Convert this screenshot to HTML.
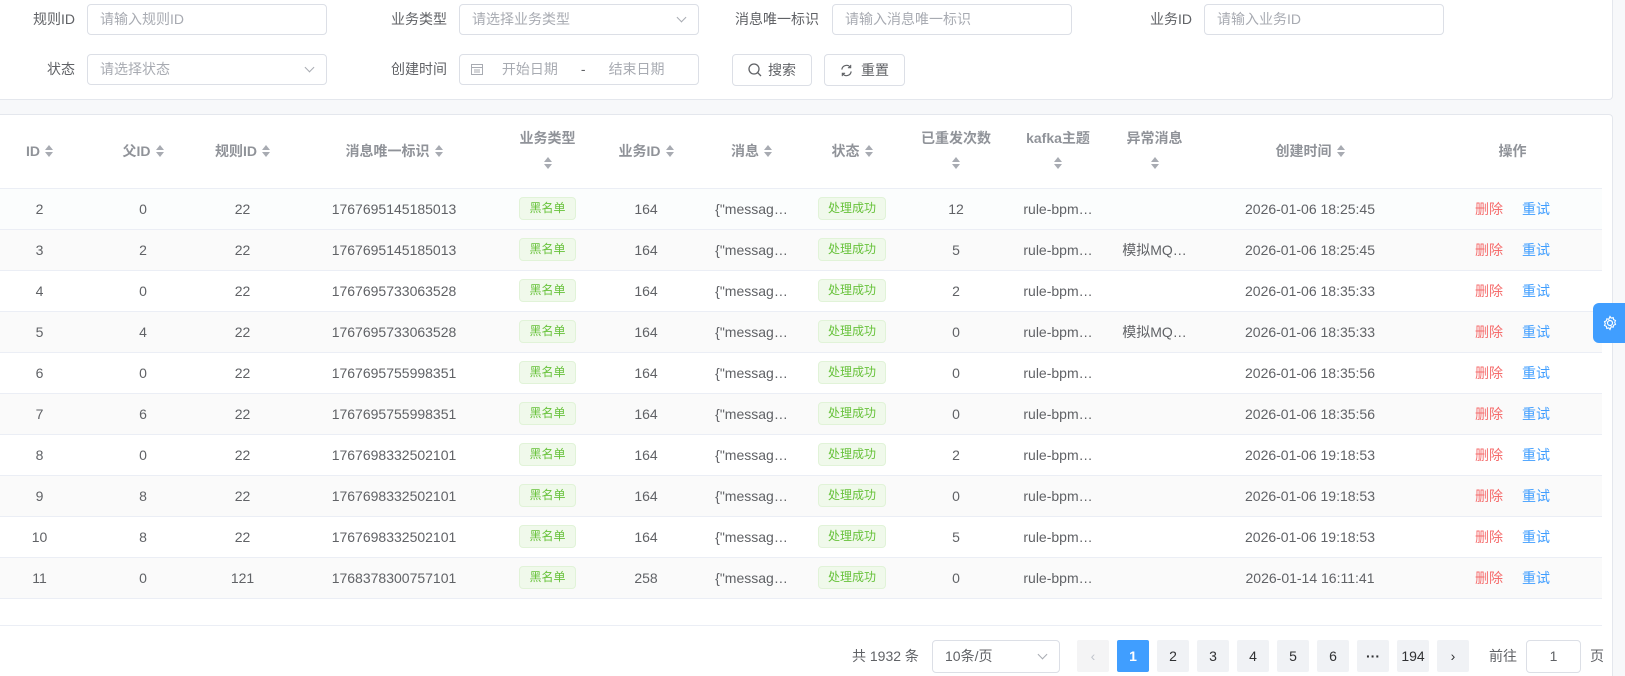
<!DOCTYPE html>
<html><head><meta charset="utf-8"><style>
*{box-sizing:border-box;margin:0;padding:0}
body{width:1625px;height:676px;overflow:hidden;background:#f7f8fa;font-family:"Liberation Sans","Noto Sans CJK SC",sans-serif;font-size:14px;color:#606266;position:relative}
.abs{position:absolute}
.filter{left:0;top:0;width:1613px;height:100px;background:#fff;border-bottom:1px solid #e4e7ed;border-right:1px solid #e4e7ed;border-radius:0 0 4px 0}
.card{left:0;top:114px;width:1613px;height:562px;border-top:1px solid #e4e7ed;border-right:1px solid #e4e7ed;border-radius:0 4px 0 0;background:#fff}
.lbl{font-size:14px;color:#606266;text-align:right;width:100px;height:31px;line-height:31px}
.inp{height:31px;border:1px solid #dcdfe6;border-radius:4px;color:#a8abb2;font-size:14px;line-height:29px;padding-left:12px;background:#fff}
.arrow{position:absolute;right:13px;top:9px;width:7px;height:7px;border-right:1px solid #a8abb2;border-bottom:1px solid #a8abb2;transform:rotate(45deg)}
.btn{height:32px;border:1px solid #dcdfe6;border-radius:4px;background:#fff;color:#606266;font-size:14px;line-height:30px;text-align:center}
table{position:absolute;left:0;top:115px;border-collapse:collapse;table-layout:fixed;width:1602px}
th{height:73px;color:#909399;font-weight:bold;font-size:14px;border-bottom:1px solid #ebeef5;text-align:center;padding:0}
td{height:41px;border-bottom:1px solid #ebeef5;text-align:center;padding:0;font-size:14px;white-space:nowrap}
tr.s td{background:#fafafa}
tr.h td{background:#fbfdfd}
.srt{display:inline-block;width:8px;height:12px;position:relative;vertical-align:-1px;margin-left:5px}
.srt:before{content:"";position:absolute;left:0;top:0;border:4px solid transparent;border-bottom:5px solid #a8abb2;border-top:0}
.srt:after{content:"";position:absolute;left:0;bottom:0;border:4px solid transparent;border-top:5px solid #a8abb2;border-bottom:0}
.tag{display:inline-block;height:23px;line-height:21px;padding:0 9px;font-size:12px;color:#67c23a;background:#f0f9eb;border:1px solid #e1f3d8;border-radius:4px}
.del{color:#f56c6c}.re{color:#409eff;margin-left:19px}
.pg{top:640px;width:32px;height:32px;border-radius:2px;background:#f0f2f5;color:#303133;text-align:center;line-height:32px;font-size:14px}
</style></head><body>
<div class="abs filter"></div>
<div class="abs card"></div>

<div class="abs lbl" style="left:-25px;top:4px">规则ID</div>
<div class="abs inp" style="left:87px;top:4px;width:240px">请输入规则ID</div>
<div class="abs lbl" style="left:347px;top:4px">业务类型</div>
<div class="abs inp" style="left:459px;top:4px;width:240px">请选择业务类型<span class="arrow"></span></div>
<div class="abs lbl" style="left:719px;top:4px">消息唯一标识</div>
<div class="abs inp" style="left:832px;top:4px;width:240px">请输入消息唯一标识</div>
<div class="abs lbl" style="left:1092px;top:4px">业务ID</div>
<div class="abs inp" style="left:1204px;top:4px;width:240px">请输入业务ID</div>

<div class="abs lbl" style="left:-25px;top:54px">状态</div>
<div class="abs inp" style="left:87px;top:54px;width:240px">请选择状态<span class="arrow"></span></div>
<div class="abs lbl" style="left:347px;top:54px">创建时间</div>
<div class="abs inp" style="left:459px;top:54px;width:240px;padding-left:11px">
<svg width="12" height="12" viewBox="0 0 12 12" style="vertical-align:-1px"><rect x="0.5" y="1.5" width="11" height="10" fill="none" stroke="#a8abb2"/><line x1="0.5" y1="4.5" x2="11.5" y2="4.5" stroke="#a8abb2"/><line x1="3" y1="7" x2="9" y2="7" stroke="#a8abb2"/><line x1="3" y1="9" x2="9" y2="9" stroke="#a8abb2"/></svg>
<span style="margin-left:15px">开始日期</span><span style="margin-left:23px;color:#606266">-</span><span style="margin-left:23px">结束日期</span></div>
<div class="abs btn" style="left:732px;top:54px;width:80px"><svg width="14" height="14" viewBox="0 0 14 14" style="vertical-align:-2px;margin-right:6px"><circle cx="6" cy="6" r="5" fill="none" stroke="#606266" stroke-width="1.3"/><line x1="9.6" y1="9.6" x2="13" y2="13" stroke="#606266" stroke-width="1.3"/></svg>搜索</div>
<div class="abs btn" style="left:824px;top:54px;width:81px"><svg width="13" height="13" viewBox="0 0 14 14" style="vertical-align:-2px;margin-right:8px"><path d="M2 6 A5 5 0 0 1 11 3.5 M12 8 A5 5 0 0 1 3 10.5" fill="none" stroke="#606266" stroke-width="1.3"/><path d="M11.5 1 V4 H8.5 M2.5 13 V10 H5.5" fill="none" stroke="#606266" stroke-width="1.2"/></svg>重置</div>

<table>
<colgroup><col style="width:79px"><col style="width:128px"><col style="width:71px"><col style="width:232px"><col style="width:75px"><col style="width:122px"><col style="width:89px"><col style="width:112px"><col style="width:96px"><col style="width:108px"><col style="width:85px"><col style="width:226px"><col style="width:179px"></colgroup>
<tr><th>ID<span class="srt"></span></th><th>父ID<span class="srt"></span></th><th>规则ID<span class="srt"></span></th><th>消息唯一标识<span class="srt"></span></th><th style="line-height:25px">业务类型<br><span class="srt" style="margin:0"></span></th><th>业务ID<span class="srt"></span></th><th>消息<span class="srt"></span></th><th>状态<span class="srt"></span></th><th style="line-height:25px">已重发次数<br><span class="srt" style="margin:0"></span></th><th style="line-height:25px">kafka主题<br><span class="srt" style="margin:0"></span></th><th style="line-height:25px">异常消息<br><span class="srt" style="margin:0"></span></th><th>创建时间<span class="srt"></span></th><th>操作</th></tr>
<tr class="h"><td>2</td><td>0</td><td>22</td><td>1767695145185013</td><td><span class="tag">黑名单</span></td><td>164</td><td>{"messag…</td><td><span class="tag">处理成功</span></td><td>12</td><td>rule-bpm…</td><td></td><td>2026-01-06 18:25:45</td><td><span class="del">删除</span><span class="re">重试</span></td></tr>
<tr class="s"><td>3</td><td>2</td><td>22</td><td>1767695145185013</td><td><span class="tag">黑名单</span></td><td>164</td><td>{"messag…</td><td><span class="tag">处理成功</span></td><td>5</td><td>rule-bpm…</td><td>模拟MQ…</td><td>2026-01-06 18:25:45</td><td><span class="del">删除</span><span class="re">重试</span></td></tr>
<tr><td>4</td><td>0</td><td>22</td><td>1767695733063528</td><td><span class="tag">黑名单</span></td><td>164</td><td>{"messag…</td><td><span class="tag">处理成功</span></td><td>2</td><td>rule-bpm…</td><td></td><td>2026-01-06 18:35:33</td><td><span class="del">删除</span><span class="re">重试</span></td></tr>
<tr class="s"><td>5</td><td>4</td><td>22</td><td>1767695733063528</td><td><span class="tag">黑名单</span></td><td>164</td><td>{"messag…</td><td><span class="tag">处理成功</span></td><td>0</td><td>rule-bpm…</td><td>模拟MQ…</td><td>2026-01-06 18:35:33</td><td><span class="del">删除</span><span class="re">重试</span></td></tr>
<tr><td>6</td><td>0</td><td>22</td><td>1767695755998351</td><td><span class="tag">黑名单</span></td><td>164</td><td>{"messag…</td><td><span class="tag">处理成功</span></td><td>0</td><td>rule-bpm…</td><td></td><td>2026-01-06 18:35:56</td><td><span class="del">删除</span><span class="re">重试</span></td></tr>
<tr class="s"><td>7</td><td>6</td><td>22</td><td>1767695755998351</td><td><span class="tag">黑名单</span></td><td>164</td><td>{"messag…</td><td><span class="tag">处理成功</span></td><td>0</td><td>rule-bpm…</td><td></td><td>2026-01-06 18:35:56</td><td><span class="del">删除</span><span class="re">重试</span></td></tr>
<tr><td>8</td><td>0</td><td>22</td><td>1767698332502101</td><td><span class="tag">黑名单</span></td><td>164</td><td>{"messag…</td><td><span class="tag">处理成功</span></td><td>2</td><td>rule-bpm…</td><td></td><td>2026-01-06 19:18:53</td><td><span class="del">删除</span><span class="re">重试</span></td></tr>
<tr class="s"><td>9</td><td>8</td><td>22</td><td>1767698332502101</td><td><span class="tag">黑名单</span></td><td>164</td><td>{"messag…</td><td><span class="tag">处理成功</span></td><td>0</td><td>rule-bpm…</td><td></td><td>2026-01-06 19:18:53</td><td><span class="del">删除</span><span class="re">重试</span></td></tr>
<tr><td>10</td><td>8</td><td>22</td><td>1767698332502101</td><td><span class="tag">黑名单</span></td><td>164</td><td>{"messag…</td><td><span class="tag">处理成功</span></td><td>5</td><td>rule-bpm…</td><td></td><td>2026-01-06 19:18:53</td><td><span class="del">删除</span><span class="re">重试</span></td></tr>
<tr class="s"><td>11</td><td>0</td><td>121</td><td>1768378300757101</td><td><span class="tag">黑名单</span></td><td>258</td><td>{"messag…</td><td><span class="tag">处理成功</span></td><td>0</td><td>rule-bpm…</td><td></td><td>2026-01-14 16:11:41</td><td><span class="del">删除</span><span class="re">重试</span></td></tr>
</table>
<div class="abs" style="left:0;top:625px;width:1602px;height:1px;background:#ebeef5"></div>

<div class="abs" style="left:852px;top:640px;line-height:32px">共 1932 条</div>
<div class="abs inp" style="left:932px;top:640px;width:128px;color:#606266;height:33px;line-height:31px">10条/页<span class="arrow" style="top:10px"></span></div>
<div class="abs pg" style="left:1077px;background:#f4f4f5;color:#c0c4cc">‹</div>
<div class="abs pg" style="left:1117px;background:#409eff;color:#fff;font-weight:bold">1</div>
<div class="abs pg" style="left:1157px">2</div>
<div class="abs pg" style="left:1197px">3</div>
<div class="abs pg" style="left:1237px">4</div>
<div class="abs pg" style="left:1277px">5</div>
<div class="abs pg" style="left:1317px">6</div>
<div class="abs pg" style="left:1357px;font-weight:bold">···</div>
<div class="abs pg" style="left:1397px">194</div>
<div class="abs pg" style="left:1437px">›</div>
<div class="abs" style="left:1489px;top:640px;line-height:32px">前往</div>
<div class="abs inp" style="left:1526px;top:640px;width:55px;padding:0;text-align:center;color:#606266;height:33px;line-height:31px">1</div>
<div class="abs" style="left:1590px;top:640px;line-height:32px">页</div>

<div class="abs" style="left:1593px;top:303px;width:40px;height:40px;background:#409eff;border-radius:6px 0 0 6px;padding:12px 0 0 9px">
<svg width="16" height="16" viewBox="0 0 16 16"><circle cx="8" cy="8" r="2.5" fill="none" stroke="#fff" stroke-width="1.2"/><path d="M8 1.5l1.2 1.6 2-.5.4 2 1.9.9-.8 1.9.8 1.9-1.9.9-.4 2-2-.5L8 14.5l-1.2-1.6-2 .5-.4-2-1.9-.9.8-1.9-.8-1.9 1.9-.9.4-2 2 .5z" fill="none" stroke="#fff" stroke-width="1.1"/></svg></div>
</body></html>
